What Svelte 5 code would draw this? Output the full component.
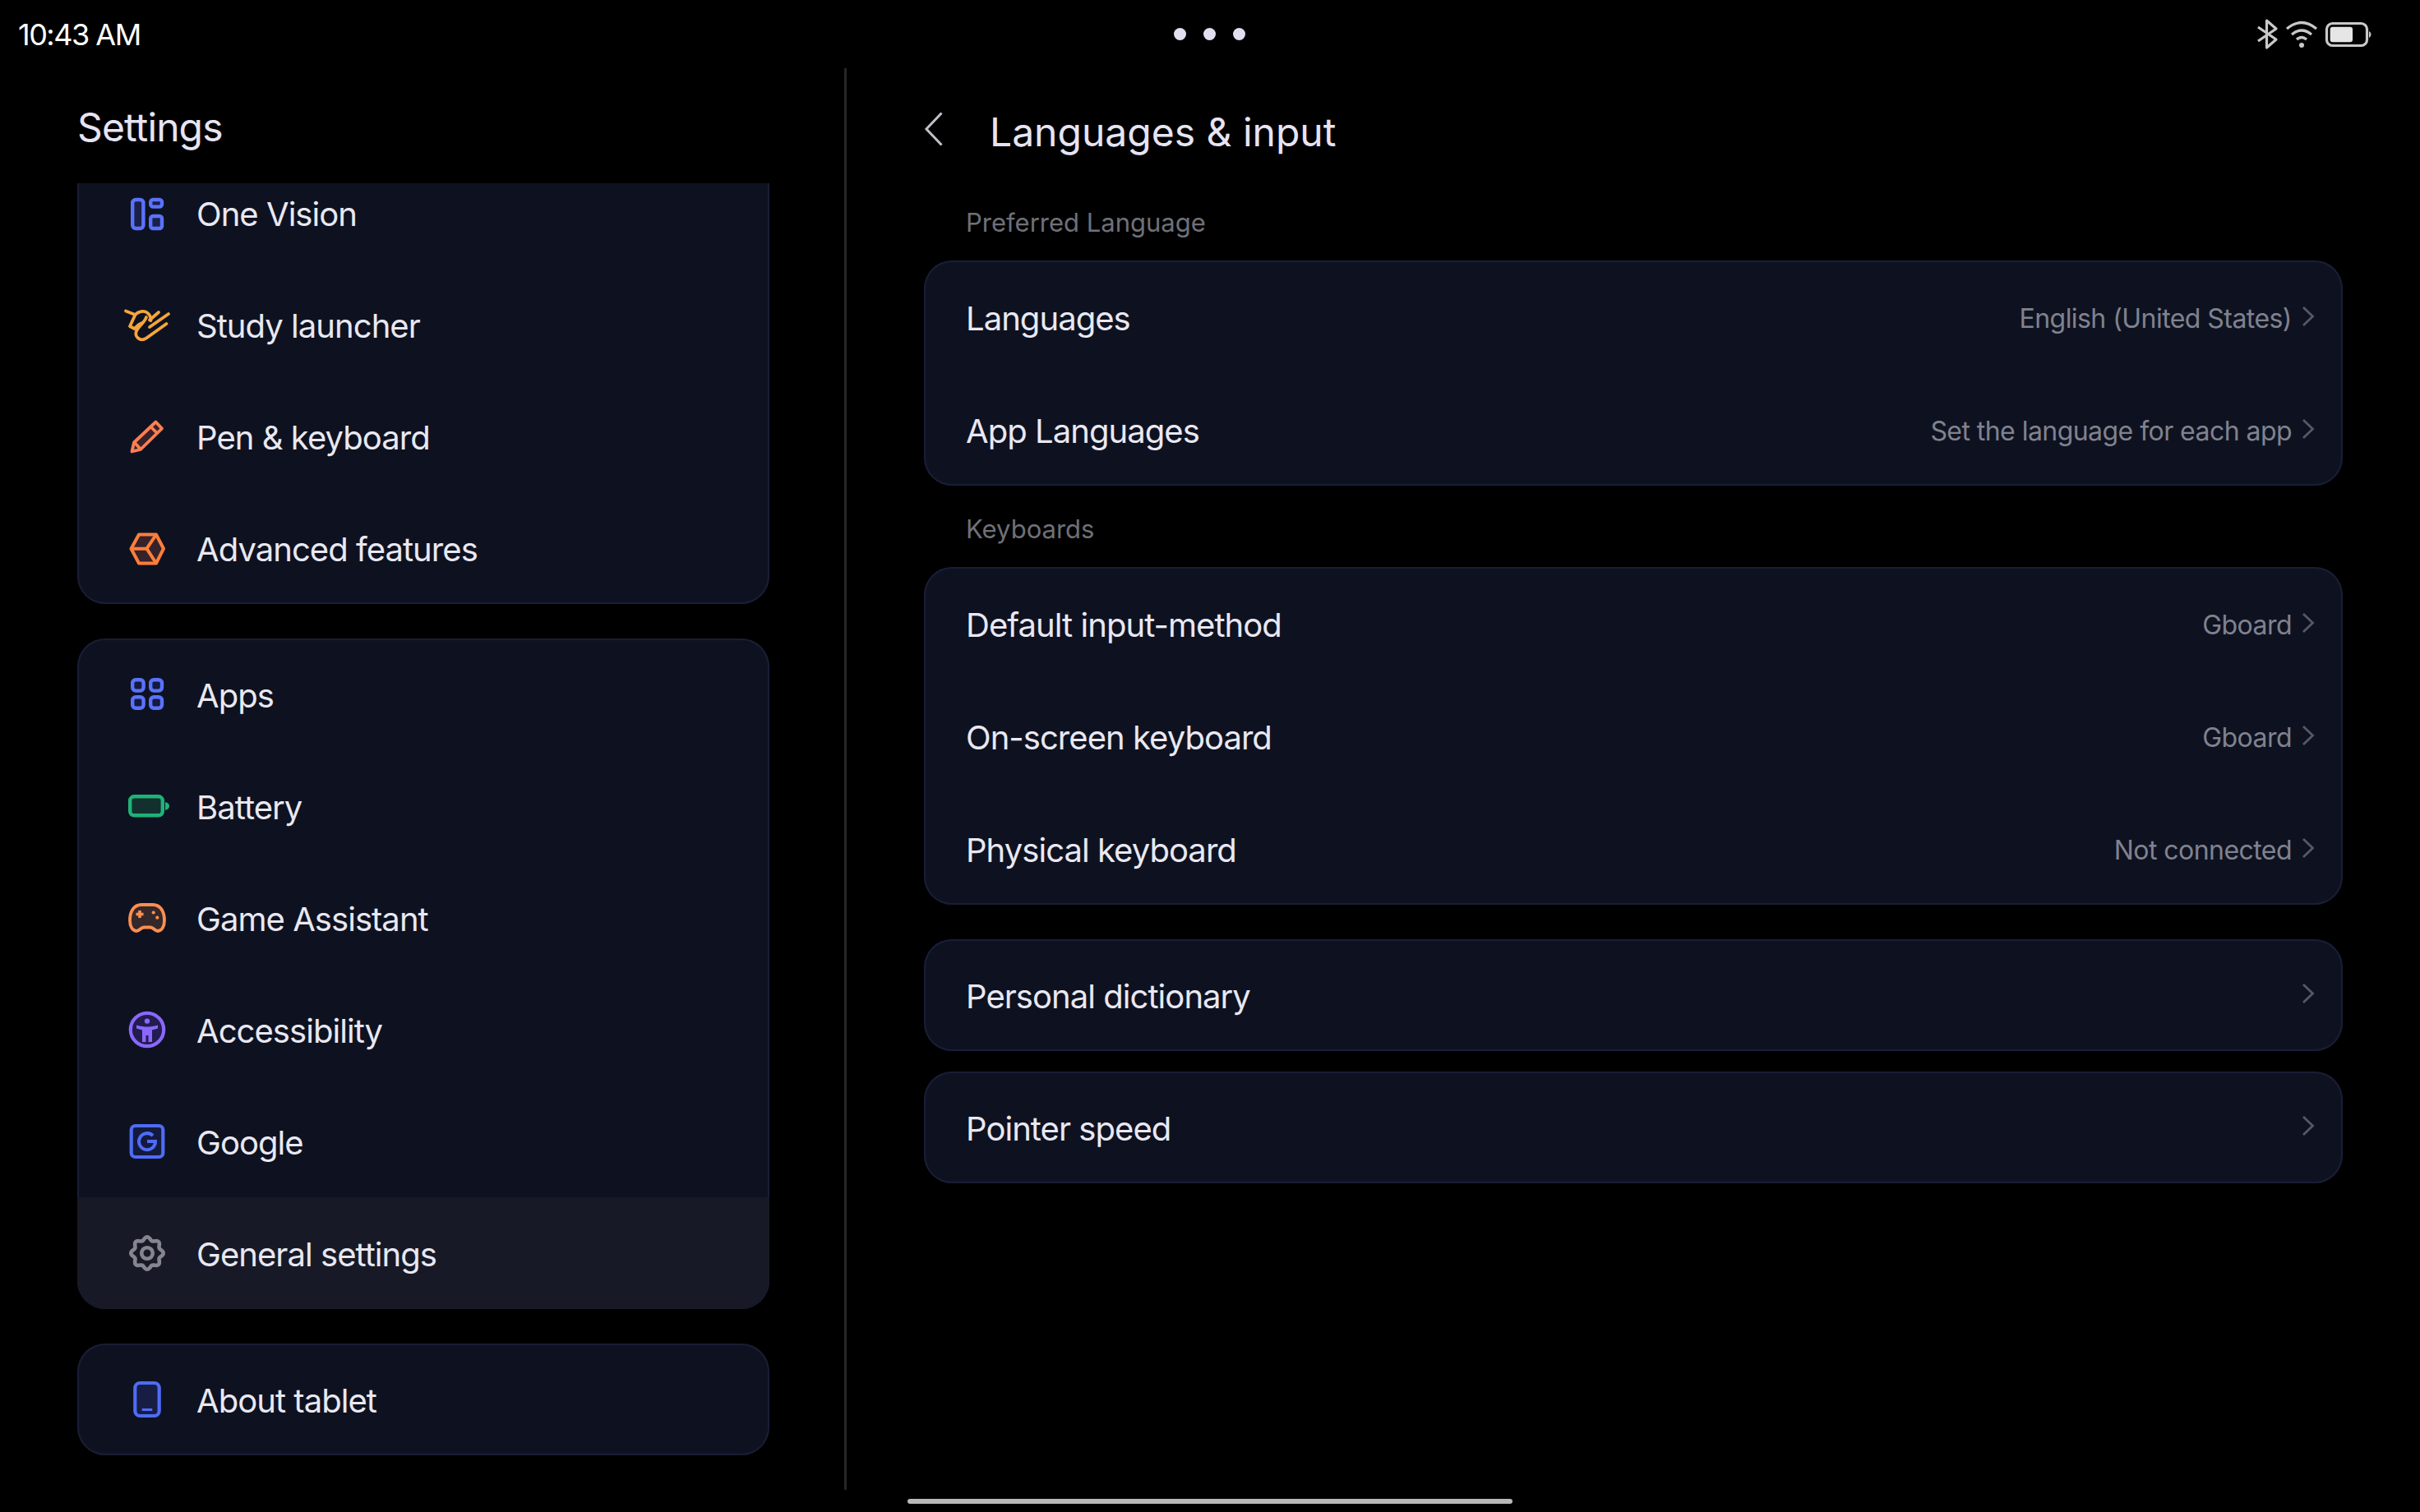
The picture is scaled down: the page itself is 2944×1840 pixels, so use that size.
<script>
  const topGroup = [
    { icon: 'vision', label: 'One Vision' },
    { icon: 'study', label: 'Study launcher' },
    { icon: 'pen', label: 'Pen & keyboard' },
    { icon: 'cube', label: 'Advanced features' },
  ];
  const systemGroup = [
    { icon: 'apps', label: 'Apps' },
    { icon: 'battery', label: 'Battery' },
    { icon: 'game', label: 'Game Assistant' },
    { icon: 'access', label: 'Accessibility' },
    { icon: 'google', label: 'Google' },
    { icon: 'gear', label: 'General settings', active: true },
  ];
  const aboutGroup = [{ icon: 'tablet', label: 'About tablet' }];

  const blocks = [
    {
      heading: 'Preferred Language',
      rows: [
        { label: 'Languages', value: 'English (United States)' },
        { label: 'App Languages', value: 'Set the language for each app' },
      ],
    },
    {
      heading: 'Keyboards',
      rows: [
        { label: 'Default input-method', value: 'Gboard' },
        { label: 'On-screen keyboard', value: 'Gboard' },
        { label: 'Physical keyboard', value: 'Not connected' },
      ],
    },
    { rows: [{ label: 'Personal dictionary' }], apart: true },
    { rows: [{ label: 'Pointer speed' }] },
  ];

  // wavy outline for the gear, 8 soft teeth
  function gearPath() {
    let d = '';
    for (let i = 0; i < 96; i++) {
      const a = (i / 96) * Math.PI * 2;
      const r = 17.8 + 1.9 * Math.cos(a * 8);
      const x = 31 + r * Math.sin(a);
      const y = 30 - r * Math.cos(a);
      d += `${i ? 'L' : 'M'}${x.toFixed(2)} ${y.toFixed(2)} `;
    }
    return d + 'Z';
  }
</script>

{#snippet icon(name)}
  <svg class="icon" viewBox={['vision', 'study', 'pen', 'cube'].includes(name) ? '0 -2 60 60' : '0 0 60 60'} fill="none">
    {#if name === 'vision'}
      <g stroke="#5a72fa" stroke-width="4.4" fill="#1a2048">
        <rect x="13.2" y="12" width="13.2" height="35" rx="4" />
        <rect x="35.2" y="12" width="13.8" height="8.6" rx="3" />
        <rect x="35.2" y="32" width="13.8" height="15" rx="3" />
      </g>
    {:else if name === 'study'}
      <g stroke="#f5a53c" stroke-width="3.8" stroke-linejoin="round" stroke-linecap="round">
        <path d="M5 11.5L16.5 16C20 12 27 10.5 31 13.5C34 15.5 35.5 19 35.5 23" />
        <path d="M16.5 16L10 30L15.5 33L21 28L25 26" />
        <path d="M30 19C28 25 22 29 19 34C16 38 17 42 20 44.5C23 47 27 46.5 30 44.5L54.5 27" />
        <path d="M45 13L34 22.5" />
        <path d="M57 15L34 31" />
      </g>
    {:else if name === 'pen'}
      <g stroke="#ff7e52" stroke-width="3.8" stroke-linejoin="round">
        <path d="M41.5 10.5L49 18.5L23 44L12.5 46.5L15 35.5Z" fill="#35222b" />
        <path d="M35.5 16.5L43.5 24.5" />
        <path d="M16 36L22.5 43" />
      </g>
    {:else if name === 'cube'}
      <g stroke="#ff7e3a" stroke-width="4" stroke-linejoin="round">
        <path d="M21 11.5H42L51 28.7L42 46.5H21L11.5 28.7Z" fill="#35222b" />
        <path d="M11.5 28.7H30.5L42 11.5M30.5 28.7L42 46.5" />
      </g>
    {:else if name === 'apps'}
      <g stroke="#5a72fa" stroke-width="4.4" fill="#141a3e">
        <rect x="13.2" y="12.2" width="13.4" height="13.4" rx="4" />
        <rect x="35.2" y="12.2" width="13.8" height="13.4" rx="4" />
        <rect x="13.2" y="33.2" width="13.4" height="13.6" rx="4" />
        <rect x="35.2" y="33.2" width="13.8" height="13.6" rx="4" />
      </g>
    {:else if name === 'battery'}
      <rect x="10.2" y="18.3" width="39.6" height="23" rx="5" stroke="#1fb27a" stroke-width="4.4" fill="#12302e" />
      <path d="M53 25C56 25.5 58 27.5 58 30C58 32.5 56 34.5 53 35Z" fill="#1fb27a" />
    {:else if name === 'game'}
      <path
        d="M24 14H38C47 14 52 22 52 33C52 40 49 46 44 46C40 46 39 41.5 35 41.5H27C23 41.5 22 46 18 46C13 46 10 40 10 33C10 22 15 14 24 14Z"
        stroke="#ff8f50"
        stroke-width="3.8"
        fill="#35282b"
      />
      <path d="M22 21V30M17.5 25.5H26.5" stroke="#ff8f50" stroke-width="3.6" />
      <circle cx="38.7" cy="23.5" r="2.1" fill="#ff8f50" />
      <circle cx="43.3" cy="29.7" r="2.1" fill="#ff8f50" />
    {:else if name === 'access'}
      <circle cx="31" cy="30" r="20.2" stroke="#8a68ff" stroke-width="4.2" fill="#231c4e" />
      <circle cx="31" cy="19.6" r="3.2" fill="#8a68ff" />
      <path
        d="M18 24.5C23 26 27 26.5 31 26.5C35 26.5 39 26 44 24.5V28.5L37 30.5V45H32.5V37H29.5V45H25V30.5L18 28.5Z"
        fill="#8a68ff"
      />
    {:else if name === 'google'}
      <rect x="11.7" y="11" width="38.6" height="38" rx="5" stroke="#4f6cf5" stroke-width="4.2" fill="#141a3e" />
      <path d="M38 23A10 10 0 1 0 41 30H31" stroke="#4f6cf5" stroke-width="4" />
    {:else if name === 'gear'}
      <path d={gearPath()} stroke="#84858f" stroke-width="4.6" />
      <circle cx="31" cy="30" r="6.8" stroke="#84858f" stroke-width="4.6" />
    {:else if name === 'tablet'}
      <rect x="16.3" y="10" width="29.4" height="40" rx="6" stroke="#4f6cf5" stroke-width="4.2" fill="#181d44" />
      <path d="M24.7 42.5H37.3" stroke="#4f6cf5" stroke-width="3" />
    {/if}
  </svg>
{/snippet}

{#snippet chevron()}
  <svg class="chev" viewBox="0 0 16 26" fill="none">
    <path d="M2 2L13.5 13L2 24" stroke="#565868" stroke-width="2.8" />
  </svg>
{/snippet}

{#snippet menu(items)}
  <div class="card">
    {#each items as item}
      <div class="menu-row" class:active={item.active}>
        {@render icon(item.icon)}
        <span>{item.label}</span>
      </div>
    {/each}
  </div>
{/snippet}

<div class="screen">
  <header class="status">
    <span class="time">10:43 AM</span>
    <div class="dots"><i></i><i></i><i></i></div>
    <svg class="sys" viewBox="0 0 140 60" fill="none">
      <g stroke="#c9c9c9" stroke-width="3.2">
        <path d="M2 21L24 36L12.5 46V13L24 23L2 38" stroke-linejoin="round" />
        <path d="M37 23Q55 8 73 23M43 30Q55 20 67 30M49 36Q55 31 61 36" />
        <rect x="85.5" y="16.5" width="49" height="27" rx="7" />
      </g>
      <circle cx="55" cy="43" r="3" fill="#c9c9c9" />
      <rect x="89.7" y="20.7" width="27.3" height="18.6" rx="3" fill="#e6e6e6" />
      <path d="M137 26C138.5 27 139.5 28.5 139.5 30C139.5 31.5 138.5 33 137 34Z" fill="#c9c9c9" />
    </svg>
  </header>

  <main class="split">
    <section class="left">
      <h1>Settings</h1>
      <div class="scroller">
        <div class="stack">
          {@render menu(topGroup)}
          {@render menu(systemGroup)}
          {@render menu(aboutGroup)}
        </div>
      </div>
    </section>

    <section class="right">
      <div class="head">
        <svg class="back" viewBox="0 0 24 42" fill="none">
          <path d="M21.5 1.5L3 21L21.5 40.5" stroke="#c0c0c8" stroke-width="3" />
        </svg>
        <h2>Languages &amp; input</h2>
      </div>

      {#each blocks as block, i}
        {#if block.heading}
          <div class="heading" class:later={i > 0}>{block.heading}</div>
        {/if}
        <div class="card wide" class:solo={!block.heading} class:apart={block.apart}>
          {#each block.rows as row}
            <div class="row">
              <span class="name">{row.label}</span>
              <span class="side">
                {#if row.value}<span class="value">{row.value}</span>{/if}
                {@render chevron()}
              </span>
            </div>
          {/each}
        </div>
      {/each}
    </section>
  </main>

  <div class="home"></div>
</div>

<style>
  :global(body) {
    margin: 0;
    background: #000;
  }
  .screen {
    width: 2944px;
    height: 1840px;
    background: #000;
    color: #e9e8f2;
    font-family: Inter, "Noto Sans", sans-serif;
    position: relative;
    overflow: hidden;
  }
  .status {
    height: 83px;
    display: grid;
    grid-template-columns: 1fr auto 1fr;
    align-items: center;
  }
  .time {
    font-size: 36px;
    letter-spacing: -1.5px;
    color: #fff;
    padding-left: 22px;
  }
  .dots {
    display: flex;
    gap: 21px;
    margin-right: 2px;
  }
  .dots i {
    width: 15px;
    height: 15px;
    border-radius: 50%;
    background: #e0e0f0;
  }
  .sys {
    width: 140px;
    height: 60px;
    justify-self: end;
    margin-right: 59px;
  }
  .split {
    display: flex;
    height: 1730px;
  }
  .left {
    width: 1027px;
    box-sizing: border-box;
    padding: 0 91px 0 94px;
    display: flex;
    flex-direction: column;
  }
  h1 {
    margin: 0;
    height: 140px;
    box-sizing: border-box;
    padding-top: 3px;
    display: flex;
    align-items: center;
    font-size: 48px;
    font-weight: 400;
    letter-spacing: -0.9px;
    color: #e6e4f4;
  }
  .scroller {
    flex: 1;
    overflow: hidden;
    min-height: 0;
  }
  .stack {
    margin-top: -32px;
    display: flex;
    flex-direction: column;
    gap: 42px;
  }
  .card {
    background: #0e1220;
    border-radius: 34px;
    box-shadow: inset 0 0 0 2px #191e36;
    overflow: hidden;
  }
  .menu-row {
    height: 136px;
    display: flex;
    align-items: center;
    gap: 31px;
    padding-left: 54px;
    font-size: 40px;
    letter-spacing: -0.95px;
  }
  .menu-row span {
    position: relative;
    top: 1px;
  }
  .menu-row.active {
    background: #171a26;
  }
  .icon {
    width: 60px;
    height: 60px;
    flex: none;
  }
  .right {
    flex: 1;
    box-sizing: border-box;
    padding: 0 94px 0 94px;
    border-left: 3px solid #262626;
  }
  .head {
    height: 140px;
    box-sizing: border-box;
    padding-top: 14px;
    display: flex;
    align-items: center;
  }
  .back {
    width: 24px;
    height: 42px;
    margin-top: -6px;
  }
  h2 {
    margin: 0 0 0 56px;
    font-size: 48px;
    font-weight: 400;
    color: #e6e4f4;
  }
  .heading {
    height: 94px;
    box-sizing: border-box;
    display: flex;
    align-items: center;
    padding-left: 51px;
    font-size: 31px;
    color: #6f7078;
  }
  .heading.later {
    margin-top: 5px;
  }
  .wide.solo {
    margin-top: 25px;
  }
  .wide.apart {
    margin-top: 42px;
  }
  .row {
    height: 137px;
    box-sizing: border-box;
    padding: 4px 34px 0 51px;
    display: flex;
    align-items: center;
    justify-content: space-between;
  }
  .solo .row {
    height: 136px;
    padding-top: 2px;
  }
  .name {
    font-size: 40px;
    letter-spacing: -0.95px;
  }
  .side {
    display: flex;
    align-items: center;
    gap: 12px;
  }
  .value {
    font-size: 32px;
    letter-spacing: -0.55px;
    color: #80828f;
  }
  .chev {
    width: 16px;
    height: 26px;
    margin-top: -6px;
  }
  .home {
    position: absolute;
    left: 1104px;
    bottom: 10px;
    width: 736px;
    height: 6px;
    border-radius: 3px;
    background: #b8b8b8;
  }
</style>
